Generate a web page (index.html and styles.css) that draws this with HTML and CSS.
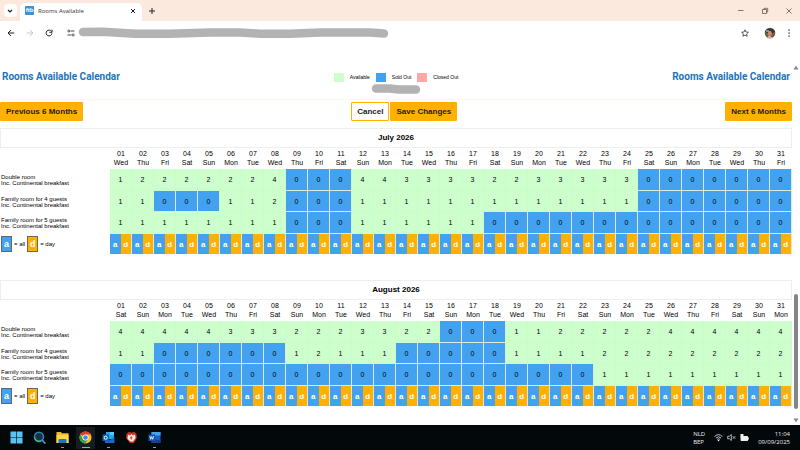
FILE: index.html
```html
<!DOCTYPE html>
<html lang="en">
<head>
    <meta charset="UTF-8">
    <meta name="viewport" content="width=device-width, initial-scale=1.0">
    <title>Rooms Available</title>
    <link rel="stylesheet" href="styles.css">
</head>
<body>
    <!-- Browser tabs -->
    <div class="tab-strip">
        <button class="tab-search" aria-label="Search tabs">
            <svg viewBox="0 0 8 8" class="icon-small"><path d="M2 3l2 2 2-2" fill="none" stroke="#222" stroke-width="1.2"/></svg>
        </button>
        <div class="tab">
            <span class="favicon">ftb</span>
            <span class="tab-title">Rooms Available</span>
            <button class="plain" aria-label="Close tab">
                <svg viewBox="0 0 8 8" class="icon-small"><path d="M2 2l4 4M6 2l-4 4" stroke="#222"/></svg>
            </button>
        </div>
        <button class="plain" aria-label="New tab">
            <svg viewBox="0 0 8 8" class="icon-small"><path d="M4 1v6M1 4h6" stroke="#222"/></svg>
        </button>
        <div class="window-buttons">
            <button class="plain" aria-label="Minimize"><svg viewBox="0 0 8 8" class="icon-small"><path d="M1 3.500h5.500" stroke="#6b5750" stroke-width=".8"/></svg></button>
            <button class="plain" aria-label="Restore"><svg viewBox="0 0 8 8" class="icon-small"><path d="M1.500 2.500h4v4h-4zM3 2.500V1.300h3.700V5H5.500" fill="none" stroke="#6b5750" stroke-width=".8"/></svg></button>
            <button class="plain" aria-label="Close"><svg viewBox="0 0 8 8" class="icon-small"><path d="M1.500 1.500l5 5M6.500 1.500l-5 5" stroke="#6b5750" stroke-width=".8"/></svg></button>
        </div>
    </div>

    <!-- Address bar -->
    <div class="toolbar">
        <div class="nav-buttons">
            <button class="plain" aria-label="Back"><svg viewBox="0 0 8 8" class="icon-small"><path d="M7.300 4H1.200M4 1L1 4l3 3" fill="none" stroke="#222"/></svg></button>
            <button class="plain" aria-label="Forward"><svg viewBox="0 0 8 8" class="icon-small"><path d="M.7 4h6.100M4 1l3 3-3 3" fill="none" stroke="#bbb" stroke-width=".8"/></svg></button>
            <button class="plain" aria-label="Reload"><svg viewBox="0 0 8 8" class="icon-small"><path d="M6.500 2.500A2.900 2.900 0 1 0 6.900 4.400" fill="none" stroke="#222"/><path d="M7 .7v2.600H4.400" fill="none" stroke="#222"/></svg></button>
        </div>
        <button class="plain" aria-label="Site information"><svg viewBox="0 0 8 8" class="icon-small"><path d="M3.500 2H7.500M.5 6h4" stroke="#333" stroke-width=".9"/><circle cx="1.800" cy="2" r="1" fill="none" stroke="#333" stroke-width=".8"/><circle cx="6.200" cy="6" r="1" fill="none" stroke="#333" stroke-width=".8"/></svg></button>
        <svg class="url-blank" viewBox="0 0 316 14"><path d="M5 6L25 5.800l32 2h35l40-1.300h30l20 1.200h30l30-1.200h50l14 1" fill="none" stroke="#b3b3b3" stroke-width="8.500" stroke-linecap="round" stroke-linejoin="round"/></svg>
        <div class="toolbar-right">
            <button class="plain" aria-label="Bookmark"><svg viewBox="0 0 8 8" class="icon-small"><path d="M4 .8l1 2.200 2.400.3-1.800 1.600.5 2.400L4 6.100 1.900 7.300l.5-2.400L.6 3.300 3 3z" fill="none" stroke="#333" stroke-width=".8"/></svg></button>
            <button class="plain" aria-label="Profile"><svg viewBox="0 0 12 12" class="icon-profile"><circle cx="6" cy="6" r="5.300" fill="#5b6a4a"/><path d="M1 5a5.300 5.300 0 0 1 10 0L8.500 6h-5z" fill="#39332c"/><path d="M2 3h3v2H2z" fill="#5b9bb8"/><ellipse cx="5.800" cy="6.400" rx="2" ry="2.600" fill="#d08a72"/><path d="M3.500 11q0-3 3-2l2 2q-3 .8-5 0z" fill="#e6a0a0"/><path d="M7.500 7l3 1-2 2z" fill="#b33f2d"/></svg></button>
            <button class="plain" aria-label="Menu"><svg viewBox="0 0 8 8" class="icon-small"><path d="M3.400.4h1.300v1.300H3.400zM3.400 3.400h1.300v1.300H3.400zM3.400 6.400h1.300v1.300H3.400z" fill="#222"/></svg></button>
        </div>
    </div>

    <div class="viewport">
        <main class="page">
            <div class="page-head">
                <h1>Rooms Available Calendar</h1>
                <div class="legend">
                    <span class="swatch available"></span>Available
                    <span class="swatch sold"></span>Sold Out
                    <span class="swatch closed"></span>Closed Out
                </div>
                <h1>Rooms Available Calendar</h1>
            </div>
            <div class="property">
                <svg viewBox="0 0 50 10" class="property-blank"><path d="M5 4.500h14l8 1h18" fill="none" stroke="#b3b3b3" stroke-width="8.500" stroke-linecap="round"/></svg>
            </div>
            <div class="actions">
                <button class="btn">Previous 6 Months</button>
                <div class="save-buttons">
                    <button class="btn btn-outline">Cancel</button>
                    <button class="btn">Save Changes</button>
                </div>
                <button class="btn">Next 6 Months</button>
            </div>
            <div id="months"></div>
        </main>
        <div class="scrollbar">
            <svg viewBox="0 0 6 5" class="scroll-arrow"><path d="M3 .5L5.500 4.500H.5z" fill="#888"/></svg>
            <div class="scroll-track"><div class="scroll-thumb"></div></div>
            <svg viewBox="0 0 6 5" class="scroll-arrow"><path d="M3 4.500L5.500.5H.5z" fill="#888"/></svg>
        </div>
    </div>

    <!-- Windows taskbar -->
    <footer class="taskbar">
        <button class="task" aria-label="Start"><svg viewBox="0 0 13 13" class="icon-task"><path d="M.5.5h5.700v5.700H.5zM6.800.5h5.700v5.700H6.800zM.5 6.800h5.700v5.700H.5zM6.800 6.800h5.700v5.700H6.800z" fill="#58c4f0"/></svg></button>
        <button class="task" aria-label="Search"><svg viewBox="0 0 13 13" class="icon-task"><circle cx="6" cy="5.800" r="4.500" fill="#17343c" stroke="#2f86c0" stroke-width="1.500"/><path d="M1.600 6.500A4.500 4.500 0 0 0 8 10" fill="none" stroke="#48b68a" stroke-width="1.400"/><path d="M9.300 9.200l2.500 2.800" stroke="#3a9ee0" stroke-width="1.700" stroke-linecap="round"/></svg></button>
        <button class="task open" aria-label="File Explorer"><svg viewBox="0 0 13 13" class="icon-task"><path d="M.5 1h4.300l1.400 1.300h6.300V12H.5z" fill="#f3b91c"/><path d="M.5 3.800h12V12H.5z" fill="#ffd84a"/><path d="M2.500 12V9q0-1 1-1h6q1 0 1 1v3z" fill="#1b78c8"/></svg></button>
        <button class="task open active" aria-label="Chrome"><svg viewBox="0 0 13 13" class="icon-task"><circle cx="6.500" cy="6.500" r="6" fill="#fbc116"/><path d="M6.500 6.500L1.300 3.500A6 6 0 0 1 11.700 3.500H6.500z" fill="#e33b2e"/><path d="M1.300 3.500A6 6 0 0 0 6.200 12.500L9.100 8 6.500 6.500 3.900 8z" fill="#2ba24c"/><circle cx="6.500" cy="6.500" r="3" fill="#fff"/><circle cx="6.500" cy="6.500" r="2.300" fill="#4285f4"/></svg></button>
        <button class="task open" aria-label="Outlook"><svg viewBox="0 0 13 13" class="icon-task"><path d="M4 1h8v7H4z" fill="#2aa5ea"/><path d="M8 1h4v3H8z" fill="#50d0ff"/><path d="M3 6l5 3 4.500-3v6H3z" fill="#1769c5"/><path d="M.5 3.500h6.500V10H.5z" fill="#0d60b8"/><circle cx="3.700" cy="6.700" r="1.600" fill="none" stroke="#fff"/></svg></button>
        <button class="task" aria-label="Irfan"><svg viewBox="0 0 13 13" class="icon-task"><path d="M1.500 3L4 .8l2.500 1L9 .8 11.500 3l.3 4L9 12H5L1 7z" fill="#c93225"/><path d="M3 3.500l2 1 1.500-1.500L8 4.500l2-1 .5 3.500L8 10.500H5.500L2.500 8z" fill="#fbe9df"/><path d="M6 5l1.500 1L6.500 9 5 7z" fill="#df4a38"/></svg></button>
        <button class="task open" aria-label="Word"><svg viewBox="0 0 13 13" class="icon-task"><path d="M3.500 1h9v11h-9z" fill="#1b5fc4"/><path d="M3.500 1h9v3.500h-9z" fill="#43a5ee"/><path d="M3.500 9h9v3h-9z" fill="#123f91"/><path d="M.5 3.500H7V10H.5z" fill="#1650b0"/><path d="M1.800 5l.9 3.300L3.700 5.500l1 2.800L5.700 5" fill="none" stroke="#fff" stroke-width=".8"/></svg></button>
        <div class="tray">
            <div class="tray-text">NLD<br>BEP</div>
            <div class="tray-icons">
                <svg viewBox="0 0 9 9" class="icon-tray"><path d="M.6 3.500q3.900-3.600 7.800 0M1.900 5q2.600-2.400 5.200 0M3.200 6.400q1.300-1.200 2.600 0" fill="none" stroke="#ddd" stroke-width=".9"/><circle cx="4.500" cy="7.500" r=".8" fill="#fff"/></svg>
                <svg viewBox="0 0 9 9" class="icon-tray"><path d="M.7 3.300h1.600l2-1.800v6l-2-1.800H.7zM5.700 3.200l2.600 2.600M8.300 3.200L5.700 5.800" fill="none" stroke="#ddd" stroke-width=".8"/></svg>
                <svg viewBox="0 0 9 9" class="icon-tray"><path d="M1 3.500h6.500v4H1z" fill="#eee" stroke="#eee"/><path d="M8 4.500h.9v2H8z" fill="#eee"/><path d="M.5 1h3v3h-3z" fill="#eee"/></svg>
            </div>
            <div class="tray-text clock">11:04<br>09/09/2025</div>
        </div>
    </footer>

    <script>
        const weekdays = ["Sun", "Mon", "Tue", "Wed", "Thu", "Fri", "Sat"];

        // Rooms left per day, one digit for each day of the month
        const months = [
            {
                name: "July 2026", firstDay: 3, rooms: [
                    { name: "Double room", left: "1222222400044333322333330000000" },
                    { name: "Family room for 4 guests", left: "1100011200011111111111110000000" },
                    { name: "Family room for 5 guests", left: "1111111100011111100000000000000" }
                ]
            },
            {
                name: "August 2026", firstDay: 6, rooms: [
                    { name: "Double room", left: "4444433322233220001122222444444" },
                    { name: "Family room for 4 guests", left: "1100000012111000001111222222222" },
                    { name: "Family room for 5 guests", left: "0000000000000000000000111111111" }
                ]
            }
        ];

        // Build the table of one month
        function showMonth(month) {
            const days = [...month.rooms[0].left];
            let html = `<section class="month"><h2>${month.name}</h2><table><thead><tr><th class="room"></th>`;
            days.forEach((d, i) => {
                html += `<th>${String(i + 1).padStart(2, "0")}<br>${weekdays[(month.firstDay + i) % 7]}</th>`;
            });
            html += "</tr></thead><tbody>";
            for (const room of month.rooms) {
                html += `<tr><th class="room">${room.name}<br>Inc. Continental breakfast</th>`;
                for (const n of room.left) {
                    html += `<td class="${n === "0" ? "sold" : "available"}">${n}</td>`;
                }
                html += "</tr>";
            }
            html += `</tbody><tfoot><tr><th class="room"><div class="key"><span class="key-box all">a</span> = all <span class="key-box day">d</span>= day</div></th>`;
            for (const d of days) {
                html += `<td><div class="pair"><button class="all">a</button><button class="day">d</button></div></td>`;
            }
            return html + "</tr></tfoot></table></section>";
        }

        document.getElementById("months").innerHTML = months.map(showMonth).join("");
    </script>
</body>
</html>
```

FILE: styles.css
```css
* {
    box-sizing: border-box;
}
body {
    margin: 0;
    height: 100vh;
    display: flex;
    flex-direction: column;
    overflow: hidden;
    font-family: "Liberation Sans", Arial, sans-serif;
    font-size: 7px;
    color: #000;
    background-color: #fff;
}
button {
    font-family: inherit;
    cursor: pointer;
}
svg {
    display: block;
    flex: none;
}
.plain {
    padding: 0;
    border: none;
    background: none;
}
.icon-small {
    width: 8px;
    height: 8px;
}

/* Browser */
.tab-strip {
    display: flex;
    align-items: center;
    height: 21px;
    padding: 0 7px 0 4px;
    background-color: #fce9de;
}
.tab-search {
    width: 13px;
    height: 13px;
    padding: 0 2px;
    border: none;
    border-radius: 4px;
    background-color: #fff;
}
.tab {
    display: flex;
    align-items: center;
    gap: 4px;
    width: 122px;
    height: 18px;
    margin: 3px 6px 0 3px;
    padding: 0 5px 3px;
    border-radius: 5px 5px 0 0;
    background-color: #fff;
}
.favicon {
    width: 9px;
    height: 9px;
    border-radius: 1px;
    background-color: #3a8fdc;
    color: #fff;
    font-size: 6px;
    font-weight: bold;
    line-height: 9px;
    text-align: center;
}
.tab-title {
    flex: 1;
    font-family: "Open Sans", "Noto Sans", sans-serif;
    font-size: 6px;
    color: #333;
}
.window-buttons {
    display: flex;
    gap: 16px;
    margin-left: auto;
}
.toolbar {
    display: flex;
    align-items: center;
    height: 24px;
    padding: 0 7px;
}
.nav-buttons {
    display: flex;
    gap: 11px;
    margin-right: 14px;
}
.url-blank {
    width: 316px;
    height: 14px;
    margin-left: 3px;
}
.toolbar-right {
    display: flex;
    align-items: center;
    gap: 15px;
    margin-left: auto;
}
.icon-profile {
    width: 12px;
    height: 12px;
}
.toolbar-right button:last-child {
    margin-left: -6px;
}
.viewport {
    flex: 1;
    min-height: 0;
    display: flex;
}
.scrollbar {
    display: flex;
    flex-direction: column;
    align-items: center;
    width: 8px;
    padding: 20px 0 2px;
}
.scroll-arrow {
    width: 6px;
    height: 5px;
}
.scroll-track {
    flex: 1;
    display: flex;
    flex-direction: column;
    justify-content: flex-end;
    padding-bottom: 9px;
}
.scroll-thumb {
    width: 4px;
    height: 34%;
    border-radius: 2px;
    background-color: #858585;
}

/* Calendar page */
.page {
    flex: 1;
    padding-top: 25px;
}
.page-head {
    display: flex;
    justify-content: space-between;
    align-items: center;
    height: 14px;
    padding: 0 2px;
}
h1 {
    margin: 0;
    font-family: Roboto, "Liberation Sans", sans-serif;
    font-size: 10px;
    font-weight: bold;
    line-height: 12px;
    color: #1c75bc;
}
.legend {
    display: flex;
    align-items: center;
    gap: 6px;
    font-size: 5px;
}
.swatch {
    width: 10px;
    height: 9px;
}
.available {
    background-color: #cfc;
}
.sold {
    background-color: #42a2f0;
}
.closed {
    background-color: #ffa8a3;
}
.property {
    display: flex;
    justify-content: center;
    height: 16px;
    border-bottom: 1px solid #f8f8f0;
}
.property-blank {
    width: 50px;
    height: 10px;
}
.actions {
    display: flex;
    justify-content: space-between;
    margin: 2px 0 7px;
}
.save-buttons {
    display: flex;
    gap: 1px;
}
.btn {
    height: 19px;
    padding: 0 5px;
    border: 1px solid #ffb000;
    border-radius: 1px;
    background-color: #ffb000;
    color: #222;
    font-size: 8px;
    font-weight: bold;
}
.btn-outline {
    background-color: #fff;
}
.month {
    margin-bottom: 26px;
}
h2 {
    margin: 0;
    border: 1px solid #eee;
    font-size: 8px;
    line-height: 18px;
    text-align: center;
}
table {
    width: 100%;
    table-layout: fixed;
    border-collapse: separate;
    border-spacing: 0;
}
th,
td {
    padding: 0;
    text-align: center;
    font-weight: normal;
}
thead tr {
    height: 21px;
    line-height: 9px;
}
thead th {
    padding-top: 1px;
    vertical-align: top;
}
tbody tr {
    height: 22px;
}
tbody tr:nth-child(even) {
    height: 21px;
}
tbody td {
    border-right: 1px solid #d5ecdf;
    border-bottom: 1px solid #d5ecdf;
}
tbody td.available {
    border-color: #cbfacb;
}
.room {
    width: 110px;
    padding-left: 1px;
    font-size: 6px;
    line-height: 6px;
    text-align: left;
}
.key {
    display: flex;
    align-items: center;
    gap: 2px;
}
.key-box {
    width: 11px;
    height: 16px;
    border: 1px solid #666;
    color: #fff;
    font-size: 9px;
    font-weight: bold;
    line-height: 14px;
    text-align: center;
}
.all {
    background-color: #42a2f0;
}
.day {
    background-color: #ffb000;
}
.pair {
    display: flex;
    height: 20px;
    border-right: 1px solid #d9e8ee;
}
.pair button {
    flex: 1;
    padding: 0;
    border: none;
    color: #fff;
    font-size: 8px;
    font-weight: bold;
}

/* Taskbar */
.taskbar {
    display: flex;
    align-items: center;
    height: 25px;
    padding: 0 10px 0 7px;
    background-color: #03080b;
    color: #eee;
}
.task {
    display: flex;
    justify-content: center;
    width: 19px;
    height: 22px;
    margin-right: 4px;
    padding: 4px 0 0;
    border: none;
    border-bottom: 1px solid transparent;
    background: none;
}
.open {
    background: linear-gradient(#999, #999) bottom / 3px 1px no-repeat;
}
.active {
    background: linear-gradient(#62bde8, #62bde8) bottom / 8px 1px no-repeat #161c20;
}
.icon-task {
    width: 13px;
    height: 13px;
}
.tray {
    display: flex;
    align-items: center;
    gap: 9px;
    margin-left: auto;
}
.tray-text {
    font-family: "Open Sans", "Noto Sans", sans-serif;
    font-size: 6px;
    line-height: 8px;
}
.clock {
    text-align: right;
}
.tray-icons {
    display: flex;
    gap: 4px;
}
.icon-tray {
    width: 9px;
    height: 9px;
}
```
